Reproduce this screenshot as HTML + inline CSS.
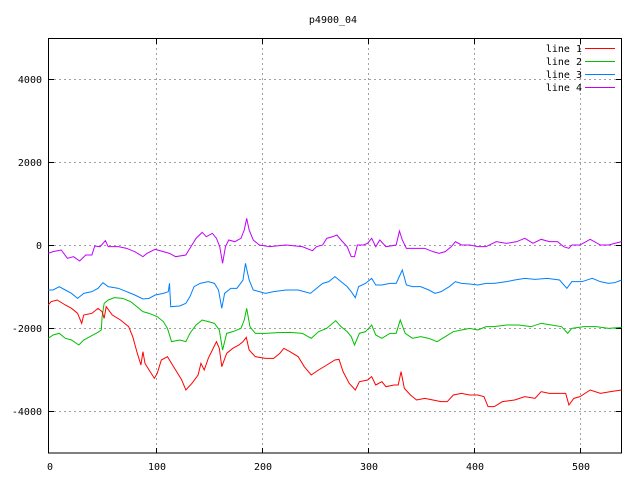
<!DOCTYPE html>
<html><head><meta charset="utf-8"><style>
html,body{margin:0;padding:0;background:#fff;width:640px;height:480px;overflow:hidden}
svg text{font-family:"DejaVu Sans Mono","Liberation Mono",monospace;font-size:10px;fill:#000}
</style></head><body>
<svg width="640" height="480" viewBox="0 0 640 480" xmlns="http://www.w3.org/2000/svg" style="position:absolute;left:0;top:0">
<text x="333" y="23" text-anchor="middle">p4900_04</text>
<g stroke="#a0a0a0" stroke-width="1" stroke-dasharray="2,3" fill="none">
<path d="M49 79.5H622M49 162.5H622M49 245.5H622M49 328.5H622M49 411.5H622"/>
<path d="M156.5 38V453M262.5 38V453M368.5 38V453M474.5 38V453M580.5 38V453"/>
</g>
<g stroke="#000" stroke-width="1" fill="none">
<rect x="48.5" y="38.5" width="573" height="414.5"/>
<path d="M49 79.5h5M49 162.5h5M49 245.5h5M49 328.5h5M49 411.5h5M621 79.5h-5M621 162.5h-5M621 245.5h-5M621 328.5h-5M621 411.5h-5"/>
<path d="M156.5 453v-5M262.5 453v-5M368.5 453v-5M474.5 453v-5M580.5 453v-5M156.5 39v5M262.5 39v5M368.5 39v5M474.5 39v5M580.5 39v5"/>
</g>
<g text-anchor="end">
<text x="42" y="83">4000</text><text x="42" y="166">2000</text><text x="42" y="249">0</text>
<text x="42" y="332">-2000</text><text x="42" y="415">-4000</text>
</g>
<g text-anchor="middle">
<text x="50" y="470">0</text><text x="157" y="470">100</text><text x="263" y="470">200</text>
<text x="369" y="470">300</text><text x="475" y="470">400</text><text x="581" y="470">500</text>
</g>
<g text-anchor="end">
<text x="582" y="52">line 1</text><text x="582" y="65">line 2</text><text x="582" y="78">line 3</text><text x="582" y="91">line 4</text>
</g>
<path d="M585 48.5h30" stroke="#ff0000"/><path d="M585 61.5h30" stroke="#00c000"/>
<path d="M585 74.5h30" stroke="#0080ff"/><path d="M585 87.5h30" stroke="#c000ff"/>
<svg x="0" y="0" width="640" height="480" viewBox="0 0 1567 1440" preserveAspectRatio="none">
<g fill="none" stroke-width="1">
<polyline vector-effect="non-scaling-stroke" stroke="#c000ff" points="118,760 130,755 150,750 165,775 180,770 195,783 210,765 225,765 232,738 245,740 258,722 265,740 290,740 310,745 330,755 350,770 360,760 380,748 400,755 415,760 430,770 455,765 470,735 480,715 495,697 505,710 520,700 530,715 538,740 545,790 552,740 560,720 575,725 590,715 598,690 604,655 610,690 620,720 635,735 660,740 700,735 740,740 765,752 775,740 790,735 800,715 815,710 825,705 835,720 850,740 860,770 868,770 875,735 890,735 900,730 910,715 920,740 930,720 945,740 970,735 978,693 985,720 995,745 1020,745 1040,745 1060,755 1075,760 1090,755 1105,740 1115,725 1130,735 1150,735 1170,740 1190,740 1215,725 1240,730 1265,725 1285,715 1305,730 1325,718 1345,725 1365,725 1380,740 1393,745 1400,735 1420,735 1445,718 1470,735 1490,735 1505,730 1522,725"/>
<polyline vector-effect="non-scaling-stroke" stroke="#0080ff" points="118,870 130,870 145,860 160,870 175,880 190,895 205,880 225,875 240,865 252,848 265,860 290,865 310,875 330,885 350,897 365,895 380,885 400,880 412,875 415,850 418,920 440,918 455,910 465,890 475,860 490,850 510,845 525,850 535,870 543,925 550,880 565,865 580,865 595,840 601,790 610,840 620,870 635,875 650,880 670,875 700,870 730,870 760,880 775,865 790,850 805,845 820,830 835,845 850,860 860,875 870,893 878,860 895,850 910,835 920,855 935,855 955,850 970,850 985,810 995,855 1010,860 1030,860 1050,870 1065,880 1080,875 1100,860 1115,845 1130,850 1150,852 1170,855 1190,850 1210,850 1240,845 1260,840 1285,835 1310,838 1340,835 1370,840 1388,865 1400,845 1425,845 1450,835 1470,845 1490,850 1505,848 1522,840"/>
<polyline vector-effect="non-scaling-stroke" stroke="#00c000" points="118,1015 130,1005 145,1000 160,1015 175,1020 193,1035 205,1020 220,1010 240,997 248,990 250,950 255,910 265,900 280,893 300,895 320,905 335,920 350,935 365,940 385,950 400,965 410,985 420,1025 440,1020 455,1025 465,1000 480,975 495,960 510,965 525,970 537,990 545,1050 555,1000 570,995 590,985 598,960 604,925 612,980 625,1000 650,1000 680,998 710,997 740,1000 762,1015 780,995 800,985 822,962 835,980 850,995 860,1010 868,1035 880,1000 895,995 910,975 920,1005 935,1015 955,1000 970,1000 980,960 992,1000 1010,1015 1030,1010 1050,1015 1070,1025 1090,1010 1110,995 1130,990 1150,985 1170,990 1190,980 1210,980 1240,975 1270,975 1300,980 1325,970 1350,975 1375,980 1390,1000 1400,985 1430,980 1460,980 1490,985 1522,982"/>
<polyline vector-effect="non-scaling-stroke" stroke="#ff0000" points="118,915 125,905 140,900 160,915 175,925 190,940 200,970 205,945 225,940 240,925 250,935 255,955 260,920 275,945 295,960 315,980 325,1010 335,1055 345,1095 350,1055 355,1090 365,1110 378,1135 385,1120 395,1080 410,1070 420,1090 430,1110 445,1140 455,1170 470,1150 485,1125 492,1090 500,1110 510,1075 520,1050 530,1025 537,1045 543,1100 555,1060 570,1045 585,1035 595,1025 603,1012 610,1050 625,1070 650,1075 670,1075 685,1060 695,1045 710,1055 730,1070 745,1100 762,1125 780,1110 800,1095 820,1080 830,1078 840,1115 855,1150 870,1170 880,1145 900,1140 910,1130 920,1155 935,1145 945,1160 965,1155 975,1155 982,1115 990,1165 1005,1185 1020,1200 1040,1195 1060,1200 1080,1205 1095,1205 1110,1185 1130,1180 1150,1185 1170,1185 1185,1190 1195,1220 1210,1220 1230,1205 1260,1200 1285,1190 1310,1195 1325,1175 1345,1180 1370,1180 1385,1180 1393,1215 1405,1195 1420,1190 1445,1170 1470,1180 1495,1175 1522,1170"/>
</g>
</svg>
</svg>
</body></html>
